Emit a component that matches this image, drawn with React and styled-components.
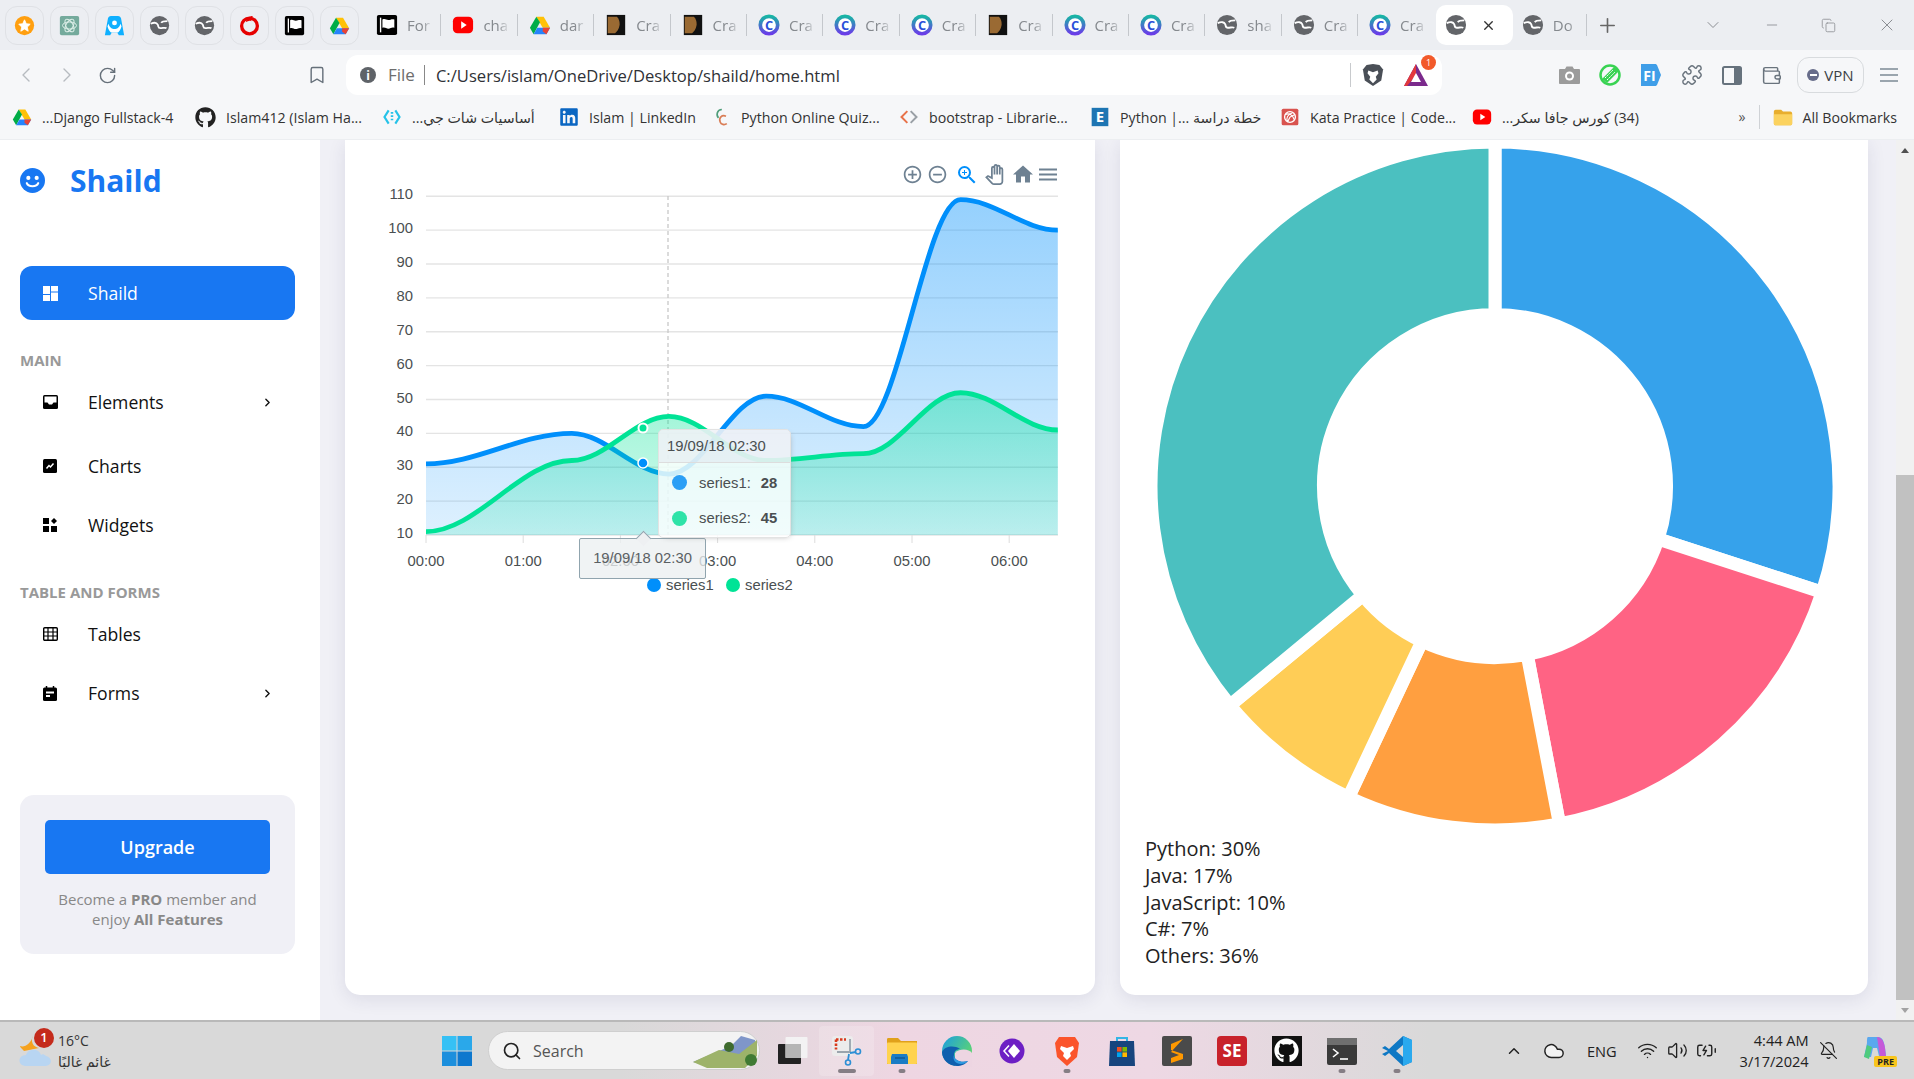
import React from "react"
import styled, { createGlobalStyle } from "styled-components"
import {
  BatteryCharging, BellOff, Bookmark, ChevronDown, ChevronLeft, ChevronRight, ChevronUp, Cloud, Copy,
  Minus, Plus, Puzzle, RotateCw, Search, Volume2, Wallet, Wifi, X,
} from "lucide-react"
import { FaGithub, FaLinkedin } from "react-icons/fa"
import {
  MdAddCircleOutline, MdHome, MdMenu, MdOutlinePanTool, MdRemoveCircleOutline, MdZoomIn,
} from "react-icons/md"

const GlobalStyle = createGlobalStyle`
  html, body {
    margin: 0;
    height: 100%;
    overflow: hidden;
    background: #f0f0f6;
  }
  * { box-sizing: border-box; }
  body {
    font-family: "Open Sans", "DejaVu Sans", sans-serif;
    color: #111;
  }
`

/* ---------- favicons, all on a 24 box ---------- */

const Favicon = ({ kind, size = 22 }) => {
  const shapes = {
    star: (
      <>
        <circle cx="12" cy="12" r="11" fill="#ff9f0f" />
        <polygon points="12,5.5 14,10 18.5,10.5 15.2,13.8 16.2,18.5 12,16 7.8,18.5 8.8,13.8 5.5,10.5 10,10" fill="#fff" stroke="#fff" strokeLinejoin="round" />
      </>
    ),
    gpt: (
      <>
        <rect x="1" y="1" width="22" height="22" rx="2" fill="#74aa9c" />
        <g fill="none" stroke="#dff0ea" strokeWidth="1.1">
          <ellipse cx="12" cy="12" rx="8" ry="4" />
          <ellipse cx="12" cy="12" rx="8" ry="4" transform="rotate(60 12 12)" />
          <ellipse cx="12" cy="12" rx="8" ry="4" transform="rotate(120 12 12)" />
        </g>
      </>
    ),
    aurora: (
      <>
        <path d="M8 1h8c2 0 3 1 3.5 3L23 23h-6l-2-3H9l-2 3H1L4.5 4C5 2 6 1 8 1z" fill="#0fb0ff" />
        <circle cx="12" cy="9" r="2.8" fill="#fff" />
        <path d="M5 10c2 5 4 6 7 6s5-1 7-6l1 3c-1 4-3 6-4 7H8c-1-1-3-3-4-7z" fill="#fff" />
      </>
    ),
    globe: (
      <>
        <circle cx="12" cy="12" r="11" fill="#636569" />
        <path d="M2 10c4-2 7-1 8 1s0 4 3 4 5-1 7 0M21 7c-3 0-6 0-7 2" fill="none" stroke="#fff" strokeWidth="2" />
      </>
    ),
    voda: (
      <>
        <circle cx="12" cy="12.5" r="9" fill="none" stroke="#e60000" strokeWidth="3.8" />
        <path d="M16 1c-4 0-8 3-8 7 2-1 4-2 6-1 0-3 1-5 2-6z" fill="#e60000" />
      </>
    ),
    flag: (
      <>
        <rect x="1" y="1" width="22" height="22" rx="2" fill="#000" />
        <path d="M5 4v16" stroke="#fff" strokeWidth="1.5" />
        <path d="M7 6c3-1.5 4 .5 6.5 .5S17 5 20 6v9c-3-1-4 1-6.5 1S10 14 7 15z" fill="#fff" />
      </>
    ),
    drive: (
      <>
        <polygon points="8,3 16,3 23,15 15,15" fill="#ffc107" />
        <polygon points="8,3 1,15 5,22 12,9" fill="#00ac47" />
        <polygon points="5,22 19,22 23,15 9,15" fill="#2684fc" />
        <polygon points="15,15 23,15 19,22 15,19" fill="#ea4335" />
      </>
    ),
    youtube: (
      <>
        <rect x="1" y="3" width="22" height="18" rx="5" fill="#f00" />
        <polygon points="10,8 16,12 10,16" fill="#fff" />
      </>
    ),
    thumb: (
      <>
        <rect x="2" y="1" width="20" height="22" fill="#111" />
        <path d="M3 3h10c2 2 3 5 3 8s-2 8-5 10H3z" fill="#9a6a33" />
      </>
    ),
    course: (
      <>
        <defs>
          <linearGradient id="courseRing" x1="0" y1="0" x2="0" y2="1">
            <stop offset="0" stopColor="#18b5a5" />
            <stop offset="1" stopColor="#6a3de8" />
          </linearGradient>
        </defs>
        <circle cx="12" cy="12" r="9.5" fill="#fff" stroke="url(#courseRing)" strokeWidth="4" />
        <text x="12" y="17" textAnchor="middle" fontSize="14" fontWeight="700" fontFamily="Open Sans" fill="#2b4fd9">C</text>
      </>
    ),
    chatcode: (
      <>
        <path d="M8 4L3 12l5 8M16 4l5 8-5 8" fill="none" stroke="#25c2e8" strokeWidth="2.6" />
        <path d="M12 6v12" stroke="#25c2e8" strokeWidth="3" strokeDasharray="2 2" />
      </>
    ),
    quiz: (
      <>
        <path d="M13 3C7 3 6 10 9 13" fill="none" stroke="#4f9d7a" strokeWidth="2" />
        <path d="M18 11c-5-2-9 2-7 7 1 3 5 4 8 2" fill="none" stroke="#d97d56" strokeWidth="2" />
      </>
    ),
    code: (
      <>
        <path d="M10 5l-7 7 7 7" fill="none" stroke="#e8734a" strokeWidth="2.4" />
        <path d="M14 5l7 7-7 7" fill="none" stroke="#9aa0a6" strokeWidth="2.4" />
      </>
    ),
    letterE: (
      <>
        <rect x="2" y="1" width="20" height="22" fill="#1d75b3" />
        <text x="12" y="18" textAnchor="middle" fontSize="18" fontWeight="700" fontFamily="Open Sans" fill="#fff">E</text>
      </>
    ),
    kata: (
      <>
        <rect x="2" y="2" width="20" height="20" rx="2" fill="#d9534f" />
        <circle cx="12" cy="12" r="6.5" fill="none" stroke="#fff" strokeWidth="1.6" />
        <path d="M6 9c5-2 9 0 11 6M9 18c-2-5 0-9 6-11M12 12l6-3M12 12l-3 6" fill="none" stroke="#fff" strokeWidth="1.3" />
      </>
    ),
    folder: (
      <>
        <path d="M2 6c0-1 1-2 2-2h6l2 2h8c1 0 2 1 2 2v11c0 1-1 2-2 2H4c-1 0-2-1-2-2z" fill="#e8ae2e" />
        <path d="M2 9h20v10c0 1-1 2-2 2H4c-1 0-2-1-2-2z" fill="#fbd25f" />
      </>
    ),
  }
  return (
    <svg width={size} height={size} viewBox="0 0 24 24" style={{ flex: "none", display: "block" }}>
      {shapes[kind]}
    </svg>
  )
}

/* ---------- tab strip ---------- */

const pinned = ["star", "gpt", "aurora", "globe", "globe", "voda", "flag", "drive"]
const tabs = [
  ["flag", "For"], ["youtube", "cha"], ["drive", "dar"], ["thumb", "Cra"], ["thumb", "Cra"], ["course", "Cra"],
  ["course", "Cra"], ["course", "Cra"], ["thumb", "Cra"], ["course", "Cra"], ["course", "Cra"], ["globe", "sha"],
  ["globe", "Cra"], ["course", "Cra"], ["globe", "", true], ["globe", "Do"],
]

const TabStrip = styled.div`
  height: 50px;
  background: #eceef2;
  display: flex;
  align-items: center;
  padding-left: 5px;
  font-size: 15px;
  color: #85898e;
`
const PinnedTab = styled.div`
  width: 39px;
  height: 39px;
  margin-right: 6px;
  border: 1px solid #dfe1e5;
  border-radius: 12px;
  display: flex;
  align-items: center;
  justify-content: center;
`
const TabItem = styled.div`
  width: 76.4px;
  height: 40px;
  flex: none;
  display: flex;
  align-items: center;
  padding-left: ${(p) => (p.$active ? "9px" : "11px")};
  gap: 9px;
  margin-left: ${(p) => (p.$active ? "2px" : "0")};
  margin-right: ${(p) => (p.$active ? "-2px" : "0")};
  background: ${(p) => (p.$active ? "#fff" : "transparent")};
  border-radius: ${(p) => (p.$active ? "10px" : "0")};
  position: relative;
  &::after {
    content: "";
    display: ${(p) => (p.$active || p.$noSep ? "none" : "block")};
    position: absolute;
    right: 0;
    top: 9px;
    bottom: 9px;
    width: 1px;
    background: #c4c7cc;
  }
`
const TabLabel = styled.span`
  width: 27px;
  overflow: hidden;
  white-space: nowrap;
  -webkit-mask-image: linear-gradient(to right, #000 55%, transparent);
  mask-image: linear-gradient(to right, #000 55%, transparent);
`
const TabClose = styled.span`
  display: flex;
  margin-left: 5px;
  color: #333;
`
const NewTab = styled.div`
  margin-left: 9px;
  display: flex;
  color: #666;
`
const WindowButtons = styled.div`
  margin-left: auto;
  display: flex;
  align-items: center;
  color: #8b8e93;
  padding-right: 17px;
  gap: 41px;
`

/* ---------- address bar ---------- */

const Toolbar = styled.div`
  height: 50px;
  background: #f6f7f9;
  display: flex;
  align-items: center;
  padding-left: 5px;
  color: #6a7178;
`
const NavButton = styled.div`
  width: 41px;
  display: flex;
  justify-content: center;
  color: ${(p) => (p.$dim ? "#b7bbc0" : "#66707a")};
  flex: none;
`
const BookmarkButton = styled(NavButton)`
  margin-left: 178px;
  margin-right: 18px;
  width: 22px;
`
const UrlPill = styled.div`
  width: 1096px;
  height: 40px;
  flex: none;
  background: #fff;
  border-radius: 12px;
  display: flex;
  align-items: center;
  padding-left: 14px;
  font-size: 17px;
  color: #333;
`
const InfoDot = styled.span`
  width: 16px;
  height: 16px;
  border-radius: 50%;
  background: #5f6368;
  color: #fff;
  font-size: 12px;
  font-weight: 700;
  display: flex;
  align-items: center;
  justify-content: center;
  margin-right: 12px;
`
const Scheme = styled.span`
  color: #6d6d6d;
  padding-right: 9px;
  border-right: 1px solid #888;
  line-height: 20px;
  margin-right: 11px;
`
const UrlText = styled.span`
  font-size: 16.6px;
  color: #2f3136;
`
const PillEnd = styled.div`
  margin-left: auto;
  display: flex;
  align-items: center;
  border-left: 1px solid #c8cacd;
  height: 24px;
  padding-left: 11px;
  gap: 19px;
  padding-right: 13px;
`
const AlertWrap = styled.div`
  position: relative;
  display: flex;
`
const AlertBadge = styled.span`
  position: absolute;
  top: -8px;
  right: -7px;
  width: 15px;
  height: 15px;
  border-radius: 50%;
  background: #f25a2b;
  color: #fff;
  font-size: 9px;
  display: flex;
  align-items: center;
  justify-content: center;
`
const ExtensionRow = styled.div`
  margin-left: 117px;
  display: flex;
  align-items: center;
  gap: 19px;
  color: #69737d;
`
const VpnPill = styled.div`
  width: 67px;
  height: 36px;
  border: 1px solid #d8dbde;
  border-radius: 12px;
  display: flex;
  align-items: center;
  justify-content: center;
  gap: 5px;
  font-size: 15px;
  margin-left: -4px;
  margin-right: -3px;
  color: #3a3f45;
`
const VpnDot = styled.span`
  width: 12px;
  height: 12px;
  border-radius: 50%;
  background: #676c8a;
  display: flex;
  align-items: center;
  justify-content: center;
  &::before {
    content: "";
    width: 7px;
    height: 2px;
    background: #fff;
  }
`

/* ---------- bookmarks ---------- */

const bookmarks = [
  ["drive", "...Django Fullstack-4", 183],
  ["github", "Islam412 (Islam Ha...", 187],
  ["chatcode", "أساسيات شات جي...", 177, true],
  ["linkedin", "Islam | LinkedIn", 152],
  ["quiz", "Python Online Quiz...", 188],
  ["code", "bootstrap - Librarie...", 191],
  ["letterE", "Python |... خطة دراسة", 190],
  ["kata", "Kata Practice | Code...", 192],
  ["youtube", "(34) كورس جافا سكر...", 190, true],
]

const BookmarkBar = styled.div`
  height: 40px;
  background: #f6f7f9;
  display: flex;
  align-items: center;
  padding: 0 17px 5px 12px;
  font-size: 14.2px;
  color: #333;
  border-bottom: 1px solid #eceef1;
`
const BookmarkItem = styled.div`
  display: flex;
  align-items: center;
  gap: 10px;
  width: ${(p) => (p.$width ? `${p.$width}px` : "auto")};
  flex: none;
  white-space: nowrap;
`
const MoreMarks = styled.span`
  margin-left: auto;
  color: #555;
  padding-right: 14px;
  border-right: 1px solid #cfd2d6;
  line-height: 24px;
`
const AllMarks = styled(BookmarkItem)`
  margin-left: 12px;
  gap: 8px;
`

/* ---------- page body ---------- */

const Body = styled.div`
  height: 880px;
  display: flex;
  overflow: hidden;
`
const Sidebar = styled.aside`
  width: 320px;
  flex: none;
  background: #fff;
  padding: 0 25px 0 20px;
`
const Brand = styled.div`
  display: flex;
  align-items: center;
  height: 25px;
  margin-top: 28px;
  margin-bottom: 73px;
  gap: 25px;
  color: #1877f2;
  font-size: 30px;
  font-weight: 700;
  line-height: 27px;
`
const NavItem = styled.div`
  height: 54px;
  display: flex;
  align-items: center;
  padding: 0 21px 0 23px;
  gap: 30px;
  font-size: 17.6px;
  margin-bottom: ${(p) => p.$after || 0}px;
  color: ${(p) => (p.$active ? "#fff" : "#111")};
  background: ${(p) => (p.$active ? "#1877f2" : "transparent")};
  border-radius: 12px;
`
const NavIcon = styled.span`
  width: 15px;
  display: flex;
  flex: none;
`
const NavArrow = styled.span`
  margin-left: auto;
  display: flex;
`
const SectionTitle = styled.div`
  font-size: 15px;
  font-weight: 700;
  color: #999;
  line-height: 20px;
  margin-top: ${(p) => p.$top}px;
  margin-bottom: 5px;
`
const UpgradeBox = styled.div`
  margin-top: 75px;
  height: 159px;
  border-radius: 14px;
  background: #f0f0f6;
  padding: 25px;
  text-align: center;
  font-size: 15px;
  line-height: 20px;
  color: #888;
`
const UpgradeButton = styled.div`
  height: 54px;
  border-radius: 5px;
  background: #1877f2;
  color: #fff;
  font-size: 18px;
  font-weight: 600;
  display: flex;
  align-items: center;
  justify-content: center;
  margin-bottom: 15px;
`
const Main = styled.main`
  flex: 1;
  display: grid;
  grid-template-columns: 750px 748px;
  gap: 25px;
  padding: 0 0 25px 25px;
`
const Card = styled.section`
  position: relative;
  background: #fff;
  border-radius: 0 0 15px 15px;
  box-shadow: 0 4px 18px rgba(40, 40, 90, 0.1);
  overflow: hidden;
`
const Scrollbar = styled.div`
  width: 18px;
  flex: none;
  background: #f1f1f1;
  display: flex;
  flex-direction: column;
  align-items: center;
`
const ScrollArrow = styled.span`
  height: 20px;
  width: 100%;
  display: flex;
  align-items: center;
  justify-content: center;
  &::before {
    content: "";
    border-left: 4px solid transparent;
    border-right: 4px solid transparent;
    border-bottom: ${(p) => (p.$down ? "0" : "5px solid #505050")};
    border-top: ${(p) => (p.$down ? "5px solid #a3a3a3" : "0")};
  }
`
const ScrollThumb = styled.div`
  width: 100%;
  height: 525px;
  margin-top: 315px;
  background: #c1c1c1;
`

/* ---------- area chart ---------- */

const hours = [0, 1.5, 2.5, 3.5, 4.5, 5.5, 6.5]
const series1 = [31, 40, 28, 51, 42, 109, 100]
const series2 = [11, 32, 45, 32, 34, 52, 41]
const xAt = (h) => 426 + h * 97.2
const yAt = (v) => 535 - (v - 10) * 3.387

// apex "smooth" curve: flat tangent at every point, control points at 35%
const linePath = (values) =>
  values.reduce((d, v, i) => {
    const x = xAt(hours[i])
    const y = yAt(v)
    if (i === 0) return `M${x} ${y}`
    const px = xAt(hours[i - 1])
    const py = yAt(values[i - 1])
    const t = (x - px) * 0.35
    return `${d} C${px + t} ${py} ${x - t} ${y} ${x} ${y}`
  }, "")
const areaPath = (values) => `${linePath(values)} L${xAt(6.5)} 535 L${xAt(0)} 535 Z`

const ChartSvg = styled.svg`
  display: block;
  font-family: "Liberation Sans", Arial, sans-serif;
  font-size: 14.8px;
  fill: #4a4f51;
`
const ChartTools = styled.div`
  position: absolute;
  top: 21px;
  left: 555px;
  display: flex;
  align-items: center;
  color: #6e8192;
`
const ToolSlot = styled.span`
  display: flex;
  width: 24px;
  justify-content: center;
  margin-left: ${(p) => p.$left || 0}px;
  color: ${(p) => p.$color || "inherit"};
`
const HoverTip = styled.div`
  position: absolute;
  left: 313px;
  top: 289px;
  width: 133px;
  height: 109px;
  background: rgba(255, 255, 255, 0.8);
  border-radius: 5px;
  box-shadow: 2px 2px 6px -4px #999;
  border: 1px solid #e3e3e3;
  font-family: "Liberation Sans", Arial, sans-serif;
  font-size: 14.8px;
  color: #4a4f51;
  overflow: hidden;
`
const HoverTitle = styled.div`
  height: 33px;
  padding-left: 8px;
  line-height: 32px;
  background: rgba(225, 228, 238, 0.45);
  border-bottom: 1px solid #ddd;
  margin-bottom: 2px;
`
const HoverRow = styled.div`
  display: flex;
  align-items: center;
  height: 35.5px;
  padding-left: 13px;
  gap: 12px;
`
const HoverDot = styled.span`
  width: 15px;
  height: 15px;
  border-radius: 50%;
  background: ${(p) => p.$color};
`
const HoverValue = styled.b`
  margin-left: -2px;
`
const AxisTip = styled.div`
  position: absolute;
  left: 234px;
  top: 398px;
  width: 127px;
  height: 41px;
  background: rgba(236, 239, 241, 0.78);
  border: 1px solid #90a4ae;
  border-radius: 2px;
  font-family: "Liberation Sans", Arial, sans-serif;
  font-size: 14.8px;
  line-height: 38px;
  text-align: center;
  color: #5a6063;
  &::before {
    content: "";
    position: absolute;
    left: 58px;
    top: -6px;
    width: 10px;
    height: 10px;
    background: #eef0f2;
    border-left: 1px solid #90a4ae;
    border-top: 1px solid #90a4ae;
    transform: rotate(45deg);
  }
`

const AreaChart = () => (
  <>
    <ChartSvg width="750" height="480" viewBox="345 140 750 480">
      <defs>
        <linearGradient id="fillBlue" gradientUnits="userSpaceOnUse" x1="0" y1="196" x2="0" y2="535">
          <stop offset="0" stopColor="#008ffb" stopOpacity="0.42" />
          <stop offset="1" stopColor="#008ffb" stopOpacity="0.13" />
        </linearGradient>
        <linearGradient id="fillGreen" gradientUnits="userSpaceOnUse" x1="0" y1="390" x2="0" y2="535">
          <stop offset="0" stopColor="#00e396" stopOpacity="0.4" />
          <stop offset="1" stopColor="#00e396" stopOpacity="0.16" />
        </linearGradient>
      </defs>
      {[110, 100, 90, 80, 70, 60, 50, 40, 30, 20, 10].map((v) => (
        <g key={v}>
          <line x1="426" x2="1058" y1={yAt(v)} y2={yAt(v)} stroke="#e4e4e4" strokeWidth="1.4" />
          <text x="413" y={yAt(v) + 3} textAnchor="end">{v}</text>
        </g>
      ))}
      <line x1="668" x2="668" y1="196" y2="535" stroke="#c8c8c8" strokeWidth="1.3" strokeDasharray="4 3" />
      <path d={areaPath(series1)} fill="url(#fillBlue)" />
      <path d={linePath(series1)} fill="none" stroke="#008ffb" strokeWidth="4.8" />
      <path d={areaPath(series2)} fill="url(#fillGreen)" />
      <path d={linePath(series2)} fill="none" stroke="#00e396" strokeWidth="4.8" />
      {[0, 1, 2, 3, 4, 5, 6].map((h) => (
        <g key={h}>
          <line x1={xAt(h)} x2={xAt(h)} y1="535" y2="543" stroke="#dcdcdc" />
          <text x={xAt(h)} y="566" textAnchor="middle">{`0${h}:00`}</text>
        </g>
      ))}
      <circle cx="643" cy="428" r="4.5" fill="#00e396" stroke="#fff" strokeWidth="2" />
      <circle cx="643" cy="463" r="5" fill="#008ffb" stroke="#fff" strokeWidth="1.5" />
      <circle cx="654" cy="585" r="7" fill="#008ffb" />
      <text x="666" y="590">series1</text>
      <circle cx="733" cy="585" r="7" fill="#00e396" />
      <text x="745" y="590">series2</text>
    </ChartSvg>
    <ChartTools>
      <ToolSlot><MdAddCircleOutline size={21} /></ToolSlot>
      <ToolSlot $left={1}><MdRemoveCircleOutline size={21} /></ToolSlot>
      <ToolSlot $left={6} $color="#008ffb"><MdZoomIn size={26} /></ToolSlot>
      <ToolSlot $left={3}><MdOutlinePanTool size={21} /></ToolSlot>
      <ToolSlot $left={5}><MdHome size={27} /></ToolSlot>
      <ToolSlot $left={1}><MdMenu size={27} /></ToolSlot>
    </ChartTools>
    <AxisTip>19/09/18 02:30</AxisTip>
    <HoverTip>
      <HoverTitle>19/09/18 02:30</HoverTitle>
      <HoverRow><HoverDot $color="#2c9ff5" />series1:<HoverValue>28</HoverValue></HoverRow>
      <HoverRow><HoverDot $color="#2fe3a8" />series2:<HoverValue>45</HoverValue></HoverRow>
    </HoverTip>
  </>
)

/* ---------- donut ---------- */

const slices = [
  { name: "Python", value: 30, color: "#36a2eb" },
  { name: "Java", value: 17, color: "#ff6384" },
  { name: "JavaScript", value: 10, color: "#ff9f40" },
  { name: "C#", value: 7, color: "#ffcd56" },
  { name: "Others", value: 36, color: "#4bc0c0" },
]

const polar = (r, pct) => {
  const a = (pct / 100) * 2 * Math.PI
  return `${375 + r * Math.sin(a)} ${346 - r * Math.cos(a)}`
}
const slicePath = (from, to) => {
  const big = to - from > 50 ? 1 : 0
  const r1 = 344
  const r0 = 171.5
  return `M${polar(r1, from)} A${r1} ${r1} 0 ${big} 1 ${polar(r1, to)} L${polar(r0, to)} A${r0} ${r0} 0 ${big} 0 ${polar(r0, from)} Z`
}

const DonutSvg = styled.svg`
  display: block;
`
const Legend = styled.div`
  padding-left: 25px;
  font-size: 20px;
  line-height: 26.8px;
  color: #222;
`

const Donut = () => {
  let start = 0
  return (
    <DonutSvg width="748" height="696" viewBox="0 0 748 696">
      {slices.map((s) => {
        const from = start
        start += s.value
        return <path key={s.name} d={slicePath(from, start)} fill={s.color} stroke="#fff" strokeWidth="13" />
      })}
    </DonutSvg>
  )
}

/* ---------- taskbar ---------- */

const Taskbar = styled.footer`
  height: 59px;
  display: flex;
  align-items: center;
  border-top: 2px solid #b9b9b9;
  background: linear-gradient(90deg, #d9d9d9 0, #d9d9d9 620px, #eed6e2 900px, #eed8e4 1150px, #d9d9d9 1430px);
  color: #333;
  position: relative;
`
const Weather = styled.div`
  width: 441px;
  flex: none;
  display: flex;
  align-items: center;
  padding-left: 19px;
  gap: 5px;
  font-size: 14px;
  line-height: 21px;
`
const WeatherIcon = styled.div`
  position: relative;
  display: flex;
`
const WeatherBadge = styled.span`
  position: absolute;
  left: 15px;
  top: -7px;
  width: 20px;
  height: 20px;
  border-radius: 50%;
  background: #c42b1c;
  color: #fff;
  font-size: 13px;
  font-weight: 600;
  display: flex;
  align-items: center;
  justify-content: center;
`
const SearchBox = styled.div`
  width: 272px;
  height: 39px;
  margin-left: 15px;
  border-radius: 20px;
  background: #f3f3f3;
  border: 1px solid #cfcfcf;
  display: flex;
  align-items: center;
  padding-left: 13px;
  gap: 11px;
  font-size: 16px;
  color: #555;
  flex: none;
`
const Scenery = styled.span`
  margin-left: auto;
  margin-right: 2px;
  display: flex;
`
const AppRow = styled.div`
  display: flex;
  margin-left: 4px;
  flex: none;
`
const AppSlot = styled.div`
  position: relative;
  width: 55px;
  height: 50px;
  display: flex;
  align-items: center;
  justify-content: center;
  border-radius: 4px;
  background: ${(p) => (p.$wide ? "rgba(255, 255, 255, 0.18)" : "transparent")};
  &::after {
    content: "";
    display: ${(p) => (p.$open ? "block" : "none")};
    position: absolute;
    bottom: 3px;
    left: 50%;
    transform: translateX(-50%);
    width: ${(p) => (p.$wide ? "18px" : "7px")};
    height: 4px;
    border-radius: 2px;
    background: #857e85;
  }
`
const Tray = styled.div`
  margin-left: 81px;
  display: flex;
  align-items: center;
  color: #222;
  flex: 1;
`
const TrayIcon = styled.span`
  display: flex;
  margin-left: ${(p) => p.$left}px;
`
const TrayLang = styled.span`
  font-size: 14.6px;
  margin-left: 22px;
`
const Clock = styled.div`
  margin-left: 22px;
  width: 70px;
  font-size: 14.6px;
  line-height: 21px;
  text-align: right;
  white-space: nowrap;
`
const PreTag = styled.span`
  position: absolute;
  right: 17px;
  bottom: 12px;
  background: #f8c51c;
  color: #222;
  font-size: 9px;
  font-weight: 700;
  padding: 0 3px;
  border-radius: 2px;
  line-height: 11px;
`

const AppIcon = ({ kind }) => {
  const shapes = {
    copy: (
      <>
        <rect x="2" y="9" width="23" height="20" rx="1" fill="#222" />
        <rect x="9.5" y="2" width="22" height="21" rx="1" fill="#f4f4f4" opacity="0.92" />
        <rect x="9.5" y="9" width="15.5" height="14" fill="#b5b5b5" />
      </>
    ),
    snip: (
      <>
        <rect x="1" y="1" width="21" height="20" rx="3" fill="#ececec" />
        <path d="M5 4.5h10M5 4.5v10" fill="none" stroke="#d9391c" strokeWidth="2.6" strokeDasharray="2.5 1.5" />
        <path d="M19 4v13M6 17h14" fill="none" stroke="#9aa4ad" strokeWidth="1.8" />
        <path d="M19 18l6-1M18 19l-1 6" stroke="#2d8fd5" strokeWidth="1.8" />
        <circle cx="27" cy="16.5" r="2.5" fill="none" stroke="#2d8fd5" strokeWidth="1.6" />
        <circle cx="17" cy="27.5" r="2.5" fill="none" stroke="#2d8fd5" strokeWidth="1.6" />
      </>
    ),
    folder: (
      <>
        <path d="M1 4c0-1 1-1 2-1h9l3 3h16v23H1z" fill="#e0a11a" />
        <rect x="1" y="7.5" width="30" height="21.5" rx="1" fill="#ffd34f" />
        <path d="M6 19h15l1 3v7H5v-7z" fill="#1b7cc5" />
        <path d="M9 23h10" stroke="#0f4f86" strokeWidth="1.2" />
      </>
    ),
    edge: (
      <>
        <defs>
          <linearGradient id="edgeTop" x1="0" y1="0" x2="1" y2="0.6">
            <stop offset="0" stopColor="#1b9de2" />
            <stop offset="1" stopColor="#5ed66f" />
          </linearGradient>
        </defs>
        <circle cx="16" cy="16" r="15" fill="url(#edgeTop)" />
        <path d="M14 18c5-5 14-4 17 0v14H14z" fill="#edd5e2" />
        <path d="M1 17c0 8 7 14 15 14 4 0 9-2 11-5-6 2-14 0-14-6 0-4 3-6 6-6-6-4-15-3-18 3z" fill="#0f5fae" />
        <path d="M13 20c0 6 8 8 14 6-2 2-4 3-7 3-5 0-9-4-7-9z" fill="#2f9ae0" />
      </>
    ),
    proton: (
      <>
        <circle cx="16" cy="16" r="12.5" fill="#6d1fc4" />
        <path d="M18 9l6 7-6 7-6-7z" fill="#fff" />
        <path d="M13 10.5l-5 5.5 5 5.5" fill="none" stroke="#fff" strokeWidth="1.5" />
      </>
    ),
    brave: (
      <>
        <path d="M8 2h16l4 6-2 14-10 9-10-9L4 8z" fill="#fb542b" />
        <path d="M10 11l6 2 6-2 1 3-4 4 1 3-4 4-4-4 1-3-4-4z" fill="#fff" />
      </>
    ),
    store: (
      <>
        <path d="M11 6V3h10v3" fill="none" stroke="#33b5e5" strokeWidth="2" />
        <path d="M4 6h24l1 25H3z" fill="#17457e" />
        <rect x="11" y="12" width="4.6" height="4.6" fill="#f25022" />
        <rect x="16.4" y="12" width="4.6" height="4.6" fill="#7fba00" />
        <rect x="11" y="17.4" width="4.6" height="4.6" fill="#00a4ef" />
        <rect x="16.4" y="17.4" width="4.6" height="4.6" fill="#ffb900" />
      </>
    ),
    sublime: (
      <>
        <rect x="1" y="1" width="30" height="30" rx="2" fill="#4a4a4a" />
        <path d="M22 6L10 11v6l12 4v5l-12 4v-5l8-3-8-3z" fill="#ff9800" transform="translate(0 -2)" />
      </>
    ),
    se: (
      <>
        <rect x="1" y="1" width="30" height="30" rx="4" fill="#c8222b" />
        <text x="16" y="22" textAnchor="middle" fontSize="17" fontWeight="700" fontFamily="Open Sans" fill="#fff">SE</text>
      </>
    ),
    terminal: (
      <>
        <rect x="1" y="3" width="30" height="27" rx="2" fill="#3a3a3a" />
        <rect x="1" y="3" width="30" height="7" fill="#6f6f6f" />
        <path d="M7 14l5 4-5 4" fill="none" stroke="#fff" strokeWidth="1.6" />
        <path d="M14 24h8" stroke="#fff" strokeWidth="1.6" />
      </>
    ),
    vscode: (
      <>
        <path d="M22 1l9 4v22l-9 4L8 18l-4 3-3-2 6-3-6-3 3-2 4 3z" fill="#0e78c4" />
        <path d="M22 1l9 4v22l-9 4z" fill="#2aa9ee" />
        <path d="M22 10l-7 6 7 6z" fill="#d9d9d9" />
      </>
    ),
    windows: (
      <>
        <rect x="1" y="1" width="14.5" height="14.5" fill="#36c1f5" />
        <rect x="16.5" y="1" width="14.5" height="14.5" fill="#2aa8ea" />
        <rect x="1" y="16.5" width="14.5" height="14.5" fill="#1c8fdd" />
        <rect x="16.5" y="16.5" width="14.5" height="14.5" fill="#0e78ce" />
      </>
    ),
    copilot: (
      <>
        <path d="M9 2h10c5 0 6 5 7 11l1 8H20l-2-8-4 0-2 9H5L8 8c0-3 0-6 1-6z" fill="#5aa8ee" />
        <path d="M18 2c5 0 7 5 8 11l1 9h-6z" fill="#c659d8" />
        <path d="M5 22l3-12 5 2-3 12z" fill="#4fcb7d" />
      </>
    ),
  }
  return (
    <svg width="32" height="32" viewBox="0 0 32 32" style={{ display: "block" }}>
      {shapes[kind]}
    </svg>
  )
}

const apps = [
  { kind: "copy" },
  { kind: "snip", open: true, wide: true },
  { kind: "folder", open: true },
  { kind: "edge" },
  { kind: "proton" },
  { kind: "brave", open: true },
  { kind: "store" },
  { kind: "sublime" },
  { kind: "se" },
  { kind: "github" },
  { kind: "terminal", open: true },
  { kind: "vscode", open: true },
]

const GithubTile = styled.span`
  width: 30px;
  height: 30px;
  background: #111;
  color: #fff;
  display: flex;
  align-items: center;
  justify-content: center;
`

function App() {
  return (
    <>
      <GlobalStyle />
      <TabStrip>
        {pinned.map((kind, i) => (
          <PinnedTab key={i}><Favicon kind={kind} size={21} /></PinnedTab>
        ))}
        {tabs.map(([kind, label, active], i) => (
          <TabItem key={i} $active={active} $noSep={i === 13}>
            <Favicon kind={kind} />
            {active ? (
              <TabClose><X size={15} strokeWidth={2.2} /></TabClose>
            ) : (
              <TabLabel>{label}</TabLabel>
            )}
          </TabItem>
        ))}
        <NewTab><Plus size={23} strokeWidth={1.7} /></NewTab>
        <WindowButtons>
          <ChevronDown size={20} strokeWidth={1.2} />
          <Minus size={16} strokeWidth={1.3} />
          <Copy size={15} strokeWidth={1.3} />
          <X size={20} strokeWidth={1.2} />
        </WindowButtons>
      </TabStrip>

      <Toolbar>
        <NavButton $dim><ChevronLeft size={24} strokeWidth={1.4} /></NavButton>
        <NavButton $dim><ChevronRight size={24} strokeWidth={1.4} /></NavButton>
        <NavButton><RotateCw size={19} strokeWidth={1.8} /></NavButton>
        <BookmarkButton><Bookmark size={20} strokeWidth={1.7} /></BookmarkButton>
        <UrlPill>
          <InfoDot>i</InfoDot>
          <Scheme>File</Scheme>
          <UrlText>C:/Users/islam/OneDrive/Desktop/shaild/home.html</UrlText>
          <PillEnd>
            <svg width="22" height="24" viewBox="0 0 24 26">
              <path d="M5 2l7-1 7 1 4 5-2 12-9 6-9-6L1 7z" fill="#4a4f57" />
              <path d="M7 8l5 2 5-2 1 3-3 4 1 3-4 4-4-4 1-3-3-4z" fill="#fff" />
            </svg>
            <AlertWrap>
              <svg width="26" height="24" viewBox="0 0 26 24">
                <polygon points="13,1 25,23 1,23" fill="#7b2a8c" />
                <polygon points="13,1 13,12 4,23 1,23" fill="#e2383c" />
                <polygon points="13,10 18,19 8,19" fill="#fff" />
              </svg>
              <AlertBadge>1</AlertBadge>
            </AlertWrap>
          </PillEnd>
        </UrlPill>
        <ExtensionRow>
          <svg width="21" height="18" viewBox="0 0 21 18">
            <path d="M1 3h5l1.5-2.5h6L15 3h5c.5 0 1 .5 1 1v13c0 .5-.5 1-1 1H1c-.5 0-1-.5-1-1V4c0-.5 .5-1 1-1z" fill="#9b9b9b" />
            <circle cx="10.5" cy="10" r="4.5" fill="#fff" />
            <circle cx="10.5" cy="10" r="2.5" fill="#9b9b9b" />
          </svg>
          <svg width="22" height="22" viewBox="0 0 22 22">
            <circle cx="11" cy="11" r="9.5" fill="none" stroke="#39d353" strokeWidth="2.5" />
            <path d="M3 15L15 3l5 4L8 19z" fill="#39d353" />
            <path d="M6 14l8-8M8 16l8-8" stroke="#fff" strokeWidth="1" strokeDasharray="2 1" />
          </svg>
          <svg width="22" height="22" viewBox="0 0 22 22">
            <path d="M1 0h14c1 0 1.5 .5 2 1l4 10-4 10c-.5 .5-1 1-2 1H1z" fill="#3f9ee8" />
            <text x="9.5" y="16.5" textAnchor="middle" fontSize="14" fontWeight="700" fontFamily="Open Sans" fill="#fff">FI</text>
          </svg>
          <Puzzle size={22} strokeWidth={1.6} />
          <svg width="20" height="19" viewBox="0 0 20 19">
            <rect x="1" y="1" width="18" height="17" rx="1.5" fill="none" stroke="#66727d" strokeWidth="2" />
            <rect x="12" y="1" width="7" height="17" fill="#66727d" />
          </svg>
          <Wallet size={21} strokeWidth={1.7} />
          <VpnPill><VpnDot />VPN</VpnPill>
          <svg width="18" height="14" viewBox="0 0 18 14">
            <path d="M0 1h18M0 7h18M0 13h18" stroke="#7c8a95" strokeWidth="1.5" />
          </svg>
        </ExtensionRow>
      </Toolbar>

      <BookmarkBar>
        {bookmarks.map(([kind, label, width, rtl]) => (
          <BookmarkItem key={label} $width={width}>
            {kind === "github" && <FaGithub size={21} color="#222" />}
            {kind === "linkedin" && <FaLinkedin size={20} color="#0a66c2" />}
            {kind !== "github" && kind !== "linkedin" && <Favicon kind={kind} size={20} />}
            {rtl ? <bdi dir="rtl">{label}</bdi> : label}
          </BookmarkItem>
        ))}
        <MoreMarks>»</MoreMarks>
        <AllMarks>
          <Favicon kind="folder" size={22} />
          All Bookmarks
        </AllMarks>
      </BookmarkBar>

      <Body>
        <Sidebar>
          <Brand>
            <svg width="25" height="25" viewBox="0 0 24 24">
              <circle cx="12" cy="12" r="12" fill="#1877f2" />
              <circle cx="8" cy="9.5" r="2" fill="#fff" />
              <circle cx="16" cy="9.5" r="2" fill="#fff" />
              <path d="M6.5 14.5c1.5 4 9.5 4 11 0" fill="none" stroke="#fff" strokeWidth="2" strokeLinecap="round" />
            </svg>
            Shaild
          </Brand>
          <NavItem $active>
            <NavIcon>
              <svg width="15" height="15" viewBox="0 0 15 15" fill="#fff">
                <rect width="7" height="8" /><rect x="8" width="7" height="5.5" />
                <rect y="9" width="7" height="6" /><rect x="8" y="6.5" width="7" height="8.5" />
              </svg>
            </NavIcon>
            Shaild
          </NavItem>
          <SectionTitle $top={30}>MAIN</SectionTitle>
          <NavItem $after={10}>
            <NavIcon>
              <svg width="15" height="14" viewBox="0 0 15 14">
                <rect width="15" height="14" rx="1.5" fill="#000" />
                <path d="M1.5 1.5h12v6h-3l-1.5 2h-3l-1.5-2h-3z" fill="#fff" />
              </svg>
            </NavIcon>
            Elements
            <NavArrow><ChevronRight size={13} strokeWidth={2.6} /></NavArrow>
          </NavItem>
          <NavItem $after={5}>
            <NavIcon>
              <svg width="14" height="14" viewBox="0 0 14 14">
                <rect width="14" height="14" rx="1.5" fill="#000" />
                <path d="M3.5 9.5L6 6.5l1.5 1.5 3-3.5" fill="none" stroke="#fff" strokeWidth="1.5" />
              </svg>
            </NavIcon>
            Charts
          </NavItem>
          <NavItem>
            <NavIcon>
              <svg width="14" height="14" viewBox="0 0 14 14" fill="#000">
                <rect width="6" height="6" /><rect y="8" width="6" height="6" /><rect x="8" y="8" width="6" height="6" />
                <polygon points="11,0 14,3 11,6 8,3" />
              </svg>
            </NavIcon>
            Widgets
          </NavItem>
          <SectionTitle $top={30}>TABLE AND FORMS</SectionTitle>
          <NavItem $after={5}>
            <NavIcon>
              <svg width="15" height="14" viewBox="0 0 15 14">
                <rect x="0.7" y="0.7" width="13.6" height="12.6" rx="1" fill="none" stroke="#000" strokeWidth="1.4" />
                <path d="M0 5h15M0 9h15M5 0v14M10 0v14" stroke="#000" strokeWidth="1.2" />
              </svg>
            </NavIcon>
            Tables
          </NavItem>
          <NavItem>
            <NavIcon>
              <svg width="14" height="15" viewBox="0 0 14 15">
                <rect y="1.5" width="14" height="13.5" rx="1.5" fill="#000" />
                <path d="M3.5 0v3M10.5 0v3" stroke="#000" strokeWidth="1.5" />
                <rect x="3" y="5.5" width="8" height="2" fill="#fff" />
                <rect x="3" y="9" width="4" height="2" fill="#fff" />
              </svg>
            </NavIcon>
            Forms
            <NavArrow><ChevronRight size={13} strokeWidth={2.6} /></NavArrow>
          </NavItem>
          <UpgradeBox>
            <UpgradeButton>Upgrade</UpgradeButton>
            Become a <b>PRO</b> member and enjoy <b>All Features</b>
          </UpgradeBox>
        </Sidebar>

        <Main>
          <Card><AreaChart /></Card>
          <Card>
            <Donut />
            <Legend>
              {slices.map((s) => (
                <div key={s.name}>{s.name}: {s.value}%</div>
              ))}
            </Legend>
          </Card>
        </Main>

        <Scrollbar>
          <ScrollArrow />
          <ScrollThumb />
          <ScrollArrow $down />
        </Scrollbar>
      </Body>

      <Taskbar>
        <Weather>
          <WeatherIcon>
            <svg width="34" height="32" viewBox="0 0 34 32">
              <path d="M14 1a8 8 0 0 0 6 12L5 16C2 13 1 12 1 11c5 2 11-3 13-10z" fill="#f5a21f" />
              <path d="M6 31c-8-1-7-11 1-11 2-7 13-7 15 0 1-1 3-1 5 1 6 1 7 9 0 10z" fill="#b8d5f2" />
            </svg>
            <WeatherBadge>1</WeatherBadge>
          </WeatherIcon>
          <div>
            <div>16°C</div>
            <div>غائم غالبًا</div>
          </div>
        </Weather>
        <AppIcon kind="windows" />
        <SearchBox>
          <Search size={20} color="#222" strokeWidth={2} />
          Search
          <Scenery>
            <svg width="64" height="34" viewBox="0 0 64 34">
              <path d="M0 28L38 12 48 2l14 4 2 14-10 12H14z" fill="#7f96c9" />
              <path d="M0 28l26-12 20 4 18-14v16L52 34H14z" fill="#9db36a" />
              <circle cx="36" cy="13" r="5" fill="#3f6b2e" />
              <circle cx="58" cy="26" r="6" fill="#3f7a33" />
            </svg>
          </Scenery>
        </SearchBox>
        <AppRow>
          {apps.map((a) => (
            <AppSlot key={a.kind} $open={a.open} $wide={a.wide}>
              {a.kind === "github" ? (
                <GithubTile><FaGithub size={25} /></GithubTile>
              ) : (
                <AppIcon kind={a.kind} />
              )}
            </AppSlot>
          ))}
        </AppRow>
        <Tray>
          <ChevronUp size={18} strokeWidth={2} />
          <TrayIcon $left={20}><Cloud size={22} strokeWidth={1.6} fill="#f2f2f2" /></TrayIcon>
          <TrayLang>ENG</TrayLang>
          <TrayIcon $left={20}><Wifi size={21} strokeWidth={1.6} /></TrayIcon>
          <TrayIcon $left={9}><Volume2 size={21} strokeWidth={1.5} /></TrayIcon>
          <TrayIcon $left={8}><BatteryCharging size={21} strokeWidth={1.6} /></TrayIcon>
          <Clock>
            <div>4:44 AM</div>
            <div>3/17/2024</div>
          </Clock>
          <TrayIcon $left={10}><BellOff size={19} strokeWidth={1.5} /></TrayIcon>
          <TrayIcon $left={21}><AppIcon kind="copilot" /></TrayIcon>
        </Tray>
        <PreTag>PRE</PreTag>
      </Taskbar>
    </>
  )
}

export default App
